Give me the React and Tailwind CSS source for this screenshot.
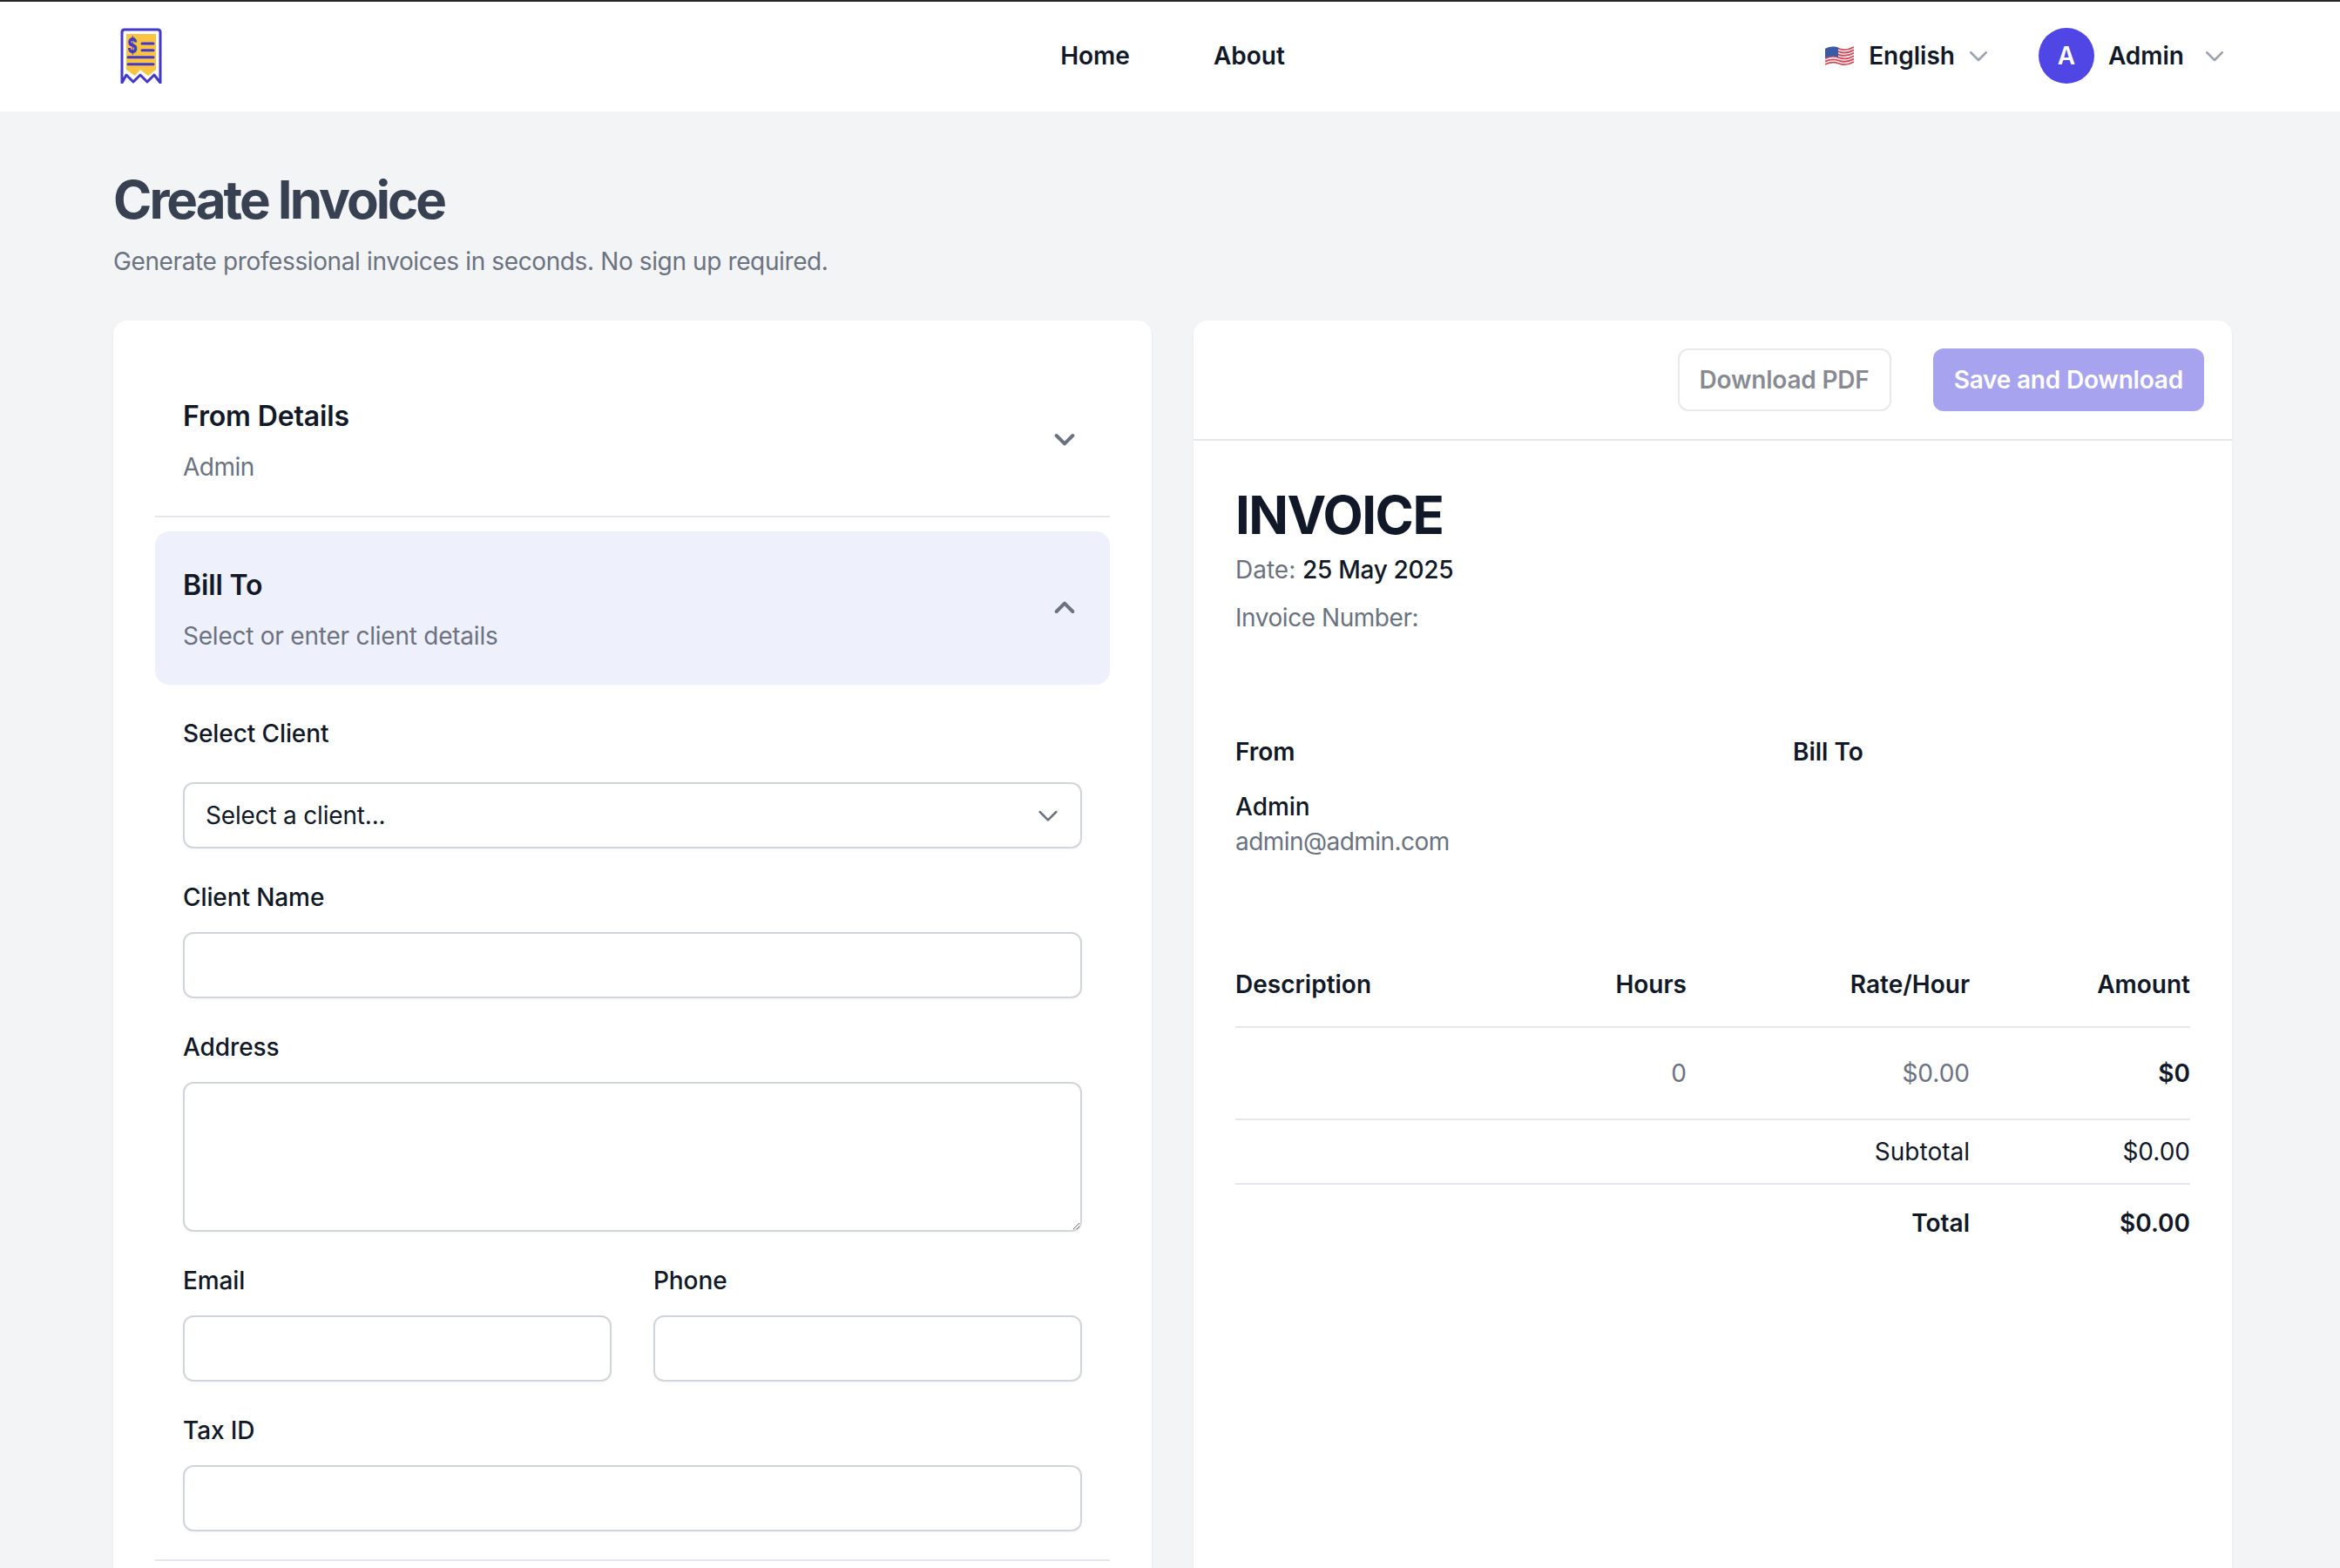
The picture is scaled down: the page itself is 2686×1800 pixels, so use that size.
const Chevron = ({ className, sw = 2 }) => (
  <svg viewBox="0 0 24 24" fill="none" stroke="currentColor" strokeWidth={sw} strokeLinecap="round" strokeLinejoin="round" className={className}>
    <path d="M5 9l7 7 7-7" />
  </svg>
);

const Logo = () => (
  <svg viewBox="0 0 48 64" className="w-[48px] h-[64px]">
    <path d="M7 7H41V48L32 55L23 48L17 55L7 48Z" fill="#fac441" />
    <path d="M2 63V5Q2 2 5 2H43Q46 2 46 5V63L39 54L31 62L23 54L15 62L7 54Z" fill="none" stroke="#4338ca" strokeWidth="3" strokeLinejoin="round" />
    <text transform="translate(14 28.500) scale(0.72 1)" textAnchor="middle" fontSize="24" fontWeight="800" fill="#4338ca" fontFamily="Inter, sans-serif">$</text>
    <path d="M25 18H38M25 25.7H38M9 33.7H38M9 41.7H38" stroke="#4338ca" strokeWidth="3" strokeLinecap="round" />
  </svg>
);

const stripes = [3, 6.4, 9.8, 13.2, 16.6, 20];
const Flag = () => (
  <svg viewBox="0 0 33 24" className="w-[33px] h-[24px]">
    <path d="M0 4Q8 0 16 3T33 1V20Q25 23 16 21T0 23Z" fill="#f2f2f5" />
    {stripes.map((y) => (
      <path key={y} d={`M0 ${y + 2}Q8 ${y - 2} 16 ${y + 1}T33 ${y - 1}`} fill="none" stroke="#d94a58" strokeWidth="1.8" />
    ))}
    <path d="M0 4Q8 0 15 2.500V13.500Q8 11 0 14.500Z" fill="#3a5aa5" />
  </svg>
);

const Field = ({ label, className = "", children }) => (
  <div className={`flex flex-col ${className}`}>
    <label className="text-[28px] leading-[40px] font-medium tracking-[-0.1px] text-[#111827]">{label}</label>
    {children}
  </div>
);

const inputCls = "block w-full h-[76px] rounded-[12px] border-2 border-[#d1d5db] bg-white px-[24px] text-[28px] shadow-[0_2px_4px_rgba(0,0,0,0.03)] outline-none";

const Row = ({ a, b, c, d, className = "" }) => (
  <div className={`grid grid-cols-[300px_218px_325px_253px] items-center text-[28px] ${className}`}>
    <div>{a}</div>
    <div className="text-right">{b}</div>
    <div className="text-right">{c}</div>
    <div className="text-right">{d}</div>
  </div>
);

export default function App() {
  return (
    <div className="h-[1800px] overflow-hidden bg-[#f3f4f6] font-['Inter',sans-serif] text-[#111827]">
      <nav className="h-[128px] border-t-2 border-[#27272a] bg-white pl-[130px] pr-[124px] pb-[2px] grid grid-cols-[1fr_auto_1fr] items-center">
        <div className="pl-[8px]"><Logo /></div>
        <div className="flex gap-[96px] text-[28px] font-semibold">
          <a>Home</a>
          <a>About</a>
        </div>
        <div className="flex items-center justify-end pr-[5px]">
          <Flag />
          <span className="ml-[17px] text-[28px] font-semibold">English</span>
          <Chevron className="ml-[12px] w-[30px] h-[30px] text-[#9ca3af]" sw={2} />
          <div className="ml-[54px] w-[64px] h-[64px] rounded-full bg-[#4f46e5] text-white flex items-center justify-center text-[28px] font-semibold">A</div>
          <span className="ml-[16px] text-[28px] font-semibold">Admin</span>
          <Chevron className="ml-[20px] w-[30px] h-[30px] text-[#9ca3af]" sw={2} />
        </div>
      </nav>

      <main className="w-[2432px] ml-[130px] pt-[65px]">
        <h1 className="text-[60px] leading-[72px] font-bold tracking-[-3px] text-[#374151]">Create Invoice</h1>
        <p className="mt-[15px] text-[28px] leading-[40px] tracking-[-0.38px] text-[#6b7280]">Generate professional invoices in seconds. No sign up required.</p>

        <div className="mt-[48px] grid grid-cols-2 gap-[48px]">
          <section className="rounded-[16px] bg-white shadow-[0_2px_4px_rgba(0,0,0,0.05)] px-[48px] pt-[48px] h-[1500px]">
            <div className="border-b-2 border-[#e5e7eb] px-[32px] py-[36px] flex items-center justify-between">
              <div>
                <h2 className="mt-[2px] text-[32px] leading-[48px] font-semibold tracking-[-0.15px]">From Details</h2>
                <p className="mt-[14px] text-[28px] leading-[40px] tracking-[-0.5px] text-[#6b7280]">Admin</p>
              </div>
              <Chevron className="w-[32px] h-[32px] text-[#6b7280] mr-[4px]" sw={3} />
            </div>

            <div className="mt-[16px] rounded-[16px] bg-[#eef0fc] px-[32px] py-[36px] flex items-center justify-between">
              <div>
                <h2 className="mt-[2px] text-[32px] leading-[48px] font-semibold tracking-[-0.15px]">Bill To</h2>
                <p className="mt-[14px] text-[28px] leading-[40px] tracking-[-0.23px] text-[#6b7280]">Select or enter client details</p>
              </div>
              <Chevron className="w-[32px] h-[32px] text-[#6b7280] mr-[4px] rotate-180" sw={3} />
            </div>

            <div className="px-[32px] pt-[36px] flex flex-col gap-[36px]">
              <Field label="Select Client">
                <div className={`${inputCls} mt-[36px] flex items-center justify-between`}>
                  <span className="tracking-[-0.19px] text-[#111827]">Select a client...</span>
                  <Chevron className="w-[32px] h-[32px] text-[#6b7280] mr-[-3px]" sw={1.9} />
                </div>
              </Field>
              <Field label="Client Name">
                <input className={`${inputCls} mt-[20px]`} />
              </Field>
              <Field label="Address">
                <textarea className={`${inputCls} mt-[20px] !h-[172px] resize-y py-[16px]`} />
              </Field>
              <div className="grid grid-cols-2 gap-[48px]">
                <Field label="Email">
                  <input className={`${inputCls} mt-[20px]`} />
                </Field>
                <Field label="Phone">
                  <input className={`${inputCls} mt-[20px]`} />
                </Field>
              </div>
              <Field label="Tax ID">
                <input className={`${inputCls} mt-[20px]`} />
              </Field>
            </div>
            <div className="mt-[32px] border-t-2 border-[#e5e7eb]" />
          </section>

          <section className="rounded-[16px] bg-white shadow-[0_2px_4px_rgba(0,0,0,0.05)] h-[1500px]">
            <div className="flex justify-end gap-[48px] border-b-2 border-[#e5e7eb] pt-[32px] pb-[32px] pr-[32px]">
              <button className="h-[72px] px-[23px] rounded-[12px] border-2 border-[#d1d5db] bg-white text-[28px] font-semibold tracking-[-0.2px] text-[#111827] opacity-50">Download PDF</button>
              <button className="h-[72px] px-[24px] rounded-[12px] bg-[#a8a3ee] text-[28px] font-semibold tracking-[-0.2px] text-white">Save and Download</button>
            </div>

            <div className="px-[48px] pt-[49px]">
              <h2 className="text-[60px] leading-[72px] font-bold tracking-[-1.5px] text-[#111827]">INVOICE</h2>
              <p className="mt-[7px] text-[28px] leading-[40px] text-[#6b7280]">Date: <span className="font-medium tracking-[-0.3px] text-[#111827]">25 May 2025</span></p>
              <p className="mt-[15px] text-[28px] leading-[40px] tracking-[-0.45px] text-[#6b7280]">Invoice Number:</p>

              <div className="mt-[114px] grid grid-cols-[640px_1fr] text-[28px] font-semibold leading-[40px]">
                <div>From</div>
                <div>Bill To</div>
              </div>
              <p className="mt-[23px] text-[28px] leading-[40px] font-medium">Admin</p>
              <p className="text-[28px] leading-[40px] tracking-[-0.55px] text-[#6b7280]">admin@admin.com</p>

              <Row className="mt-[120px] h-[48px] font-semibold" a="Description" b="Hours" c="Rate/Hour" d="Amount" />
              <div className="mt-[24px] border-t-2 border-[#e5e7eb]" />
              <Row className="h-[104px] text-[#6b7280]" a="" b="0" c="$0.00" d={<span className="font-semibold text-[#111827]">$0</span>} />
              <div className="border-t-2 border-[#e5e7eb]" />
              <Row className="h-[72px]" a="" b="" c="Subtotal" d="$0.00" />
              <div className="border-t-2 border-[#e5e7eb]" />
              <Row className="h-[88px] font-semibold" a="" b="" c="Total" d="$0.00" />
            </div>
          </section>
        </div>
      </main>
    </div>
  );
}
